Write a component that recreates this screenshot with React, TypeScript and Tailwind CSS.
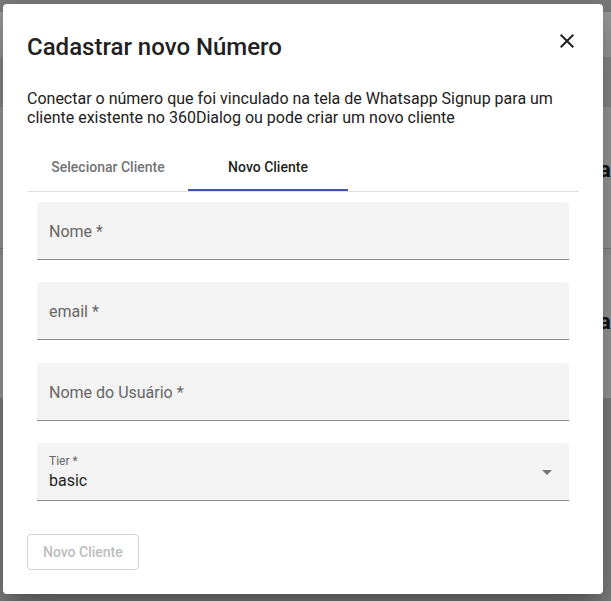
export default function App() {
  return (
    <div className="relative w-[611px] h-[601px] overflow-hidden font-['Roboto','Noto_Sans',sans-serif]">
      {/* underlying page dimmed by backdrop */}
      <div className="flex flex-col h-full">
        <div className="h-[12px] bg-[#7b7b7b]" />
        <div className="h-[45px] bg-[#9a9a9a]" />
        <div className="h-[50px] bg-[#8a8a8a]" />
        <div className="h-[141px] bg-[#9a9a9a] pl-[599px] pt-[50px] text-[22px] leading-[26px] font-bold text-[#111]">a</div>
        <div className="h-px bg-[#7e7e7e]" />
        <div className="h-[6px] bg-[#939393]" />
        <div className="h-[143px] bg-[#9a9a9a] pl-[599px] pt-[54px] text-[22px] leading-[26px] font-bold text-[#111]">a</div>
        <div className="h-px bg-[#7e7e7e]" />
        <div className="flex-1 bg-[#7f7f7f]" />
      </div>

      {/* dialog */}
      <div className="absolute left-[3px] top-[4px] w-[600px] bg-white rounded-[4px] px-[24px] pt-[25px] pb-[24px] shadow-[0px_11px_15px_-7px_rgba(0,0,0,0.2),0px_24px_38px_3px_rgba(0,0,0,0.14),0px_9px_46px_8px_rgba(0,0,0,0.12)]">
        <div className="flex justify-between items-start">
          <h2 className="mt-[2px] text-[24px] leading-[32px] font-medium text-[#212121]">Cadastrar novo Número</h2>
          <svg className="w-6 h-6" viewBox="0 0 24 24">
            <path fill="#212121" d="M19 6.41L17.59 5 12 10.59 6.41 5 5 6.41 10.59 12 5 17.59 6.41 19 12 13.41 17.59 19 19 17.59 13.41 12z" />
          </svg>
        </div>
        <p className="mt-[26px] text-[16px] leading-[19px] text-[#212121]">
          Conectar o número que foi vinculado na tela de Whatsapp Signup para um cliente existente no 360Dialog ou pode criar um novo cliente
        </p>
        <div className="mt-[16px] flex pl-[1px] border-b border-[#e0e0e0]">
          <div className="w-[160px] h-[48px] flex items-center justify-center text-[14px] font-medium text-[#737373]">Selecionar Cliente</div>
          <div className="w-[160px] h-[48px] pt-[2px] flex items-center justify-center text-[14px] font-medium text-[#1f1f1f] border-b-2 border-[#3f51b5]">Novo Cliente</div>
        </div>
        <div className="px-[10px] pt-[10px] flex flex-col">
          <div className="h-[58px] bg-[#f3f3f3] rounded-t-[4px] border-b border-[#8c8c8c] flex items-center pt-[2px] px-[12px] text-[16px] text-[#666]">Nome *</div>
          <div className="mt-[22px] h-[58px] bg-[#f3f3f3] rounded-t-[4px] border-b border-[#8c8c8c] flex items-center pt-[2px] px-[12px] text-[16px] text-[#666]">email *</div>
          <div className="mt-[23px] h-[58px] bg-[#f3f3f3] rounded-t-[4px] border-b border-[#8c8c8c] flex items-center pt-[2px] px-[12px] text-[16px] text-[#666]">Nome do Usuário *</div>
          <div className="mt-[22px] h-[58px] bg-[#f3f3f3] rounded-t-[4px] border-b border-[#8c8c8c] flex items-center pl-[12px] pr-[10px]">
            <div className="flex-1 flex flex-col">
              <span className="text-[12px] leading-[14px] text-[#666]">Tier *</span>
              <span className="mt-[3px] text-[16px] leading-[19px] text-[#1f1f1f]">basic</span>
            </div>
            <svg className="w-6 h-6" viewBox="0 0 24 24">
              <path fill="#757575" d="M7 10l5 5 5-5z" />
            </svg>
          </div>
        </div>
        <button className="mt-[33px] h-[36px] px-[15px] border border-[#d3d3d3] rounded-[4px] text-[14px] font-medium text-[#bdbdbd]">Novo Cliente</button>
      </div>
    </div>
  );
}
